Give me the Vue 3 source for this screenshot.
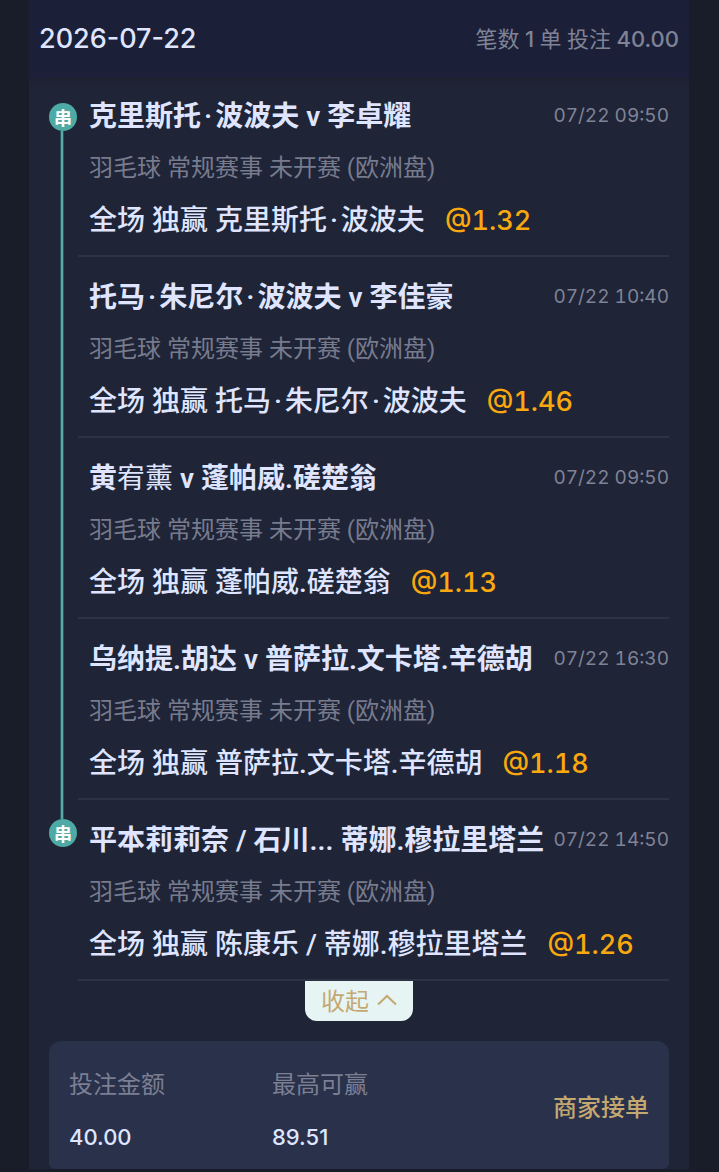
<script setup>
const bets = [
  { match: '克里斯托·波波夫 v 李卓耀', time: '07/22 09:50', pick: '全场 独赢 克里斯托·波波夫', odds: '@1.32' },
  { match: '托马·朱尼尔·波波夫 v 李佳豪', time: '07/22 10:40', pick: '全场 独赢 托马·朱尼尔·波波夫', odds: '@1.46' },
  { match: '黄宥薰 v 蓬帕威.磋楚翁', time: '07/22 09:50', pick: '全场 独赢 蓬帕威.磋楚翁', odds: '@1.13' },
  { match: '乌纳提.胡达 v 普萨拉.文卡塔.辛德胡', time: '07/22 16:30', pick: '全场 独赢 普萨拉.文卡塔.辛德胡', odds: '@1.18' },
  { match: '平本莉莉奈 / 石川... 蒂娜.穆拉里塔兰', time: '07/22 14:50', pick: '全场 独赢 陈康乐 / 蒂娜.穆拉里塔兰', odds: '@1.26' },
]

// Splits a name so that its middle dots and rare characters can be styled.
function parts(text) {
  return text
    .split(/(·|宥薰)/)
    .filter(Boolean)
    .map((t) => ({ text: t, dot: t === '·', light: t === '宥薰' }))
}
</script>

<template>
  <main class="page">
    <section class="panel">
      <header class="day">
        <h1 class="date">2026-07-22</h1>
        <p class="totals">笔数 <b>1</b> 单 投注 <b>40.00</b></p>
      </header>

      <div class="slip">
        <div class="parlay">
          <div class="rail">
            <span class="badge">串</span>
            <span class="line"></span>
            <span class="badge">串</span>
          </div>
          <ul class="bets">
            <li v-for="bet in bets" :key="bet.match" class="bet">
              <div class="top">
                <h2 class="match"><span v-for="(p, i) in parts(bet.match)" :key="i" :class="{ light: p.light, dot: p.dot }">{{ p.text }}</span></h2>
                <time class="time">{{ bet.time }}</time>
              </div>
              <p class="league">羽毛球 常规赛事 未开赛 (欧洲盘)</p>
              <p class="pick"><span v-for="(p, i) in parts(bet.pick)" :key="i" :class="{ dot: p.dot }">{{ p.text }}</span><span class="odds">{{ bet.odds }}</span></p>
            </li>
          </ul>
        </div>

        <button class="toggle" type="button">
          收起
          <svg class="chevron" viewBox="0 0 20 12" aria-hidden="true"><path d="M1 10.500 10 2l9 8.500" /></svg>
        </button>

        <div class="summary">
          <dl class="stat"><dt>投注金额</dt><dd>40.00</dd></dl>
          <dl class="stat"><dt>最高可赢</dt><dd>89.51</dd></dl>
          <p class="status">商家接单</p>
        </div>
      </div>
    </section>
  </main>
</template>

<style>
body {
  margin: 0;
  background: #191c29;
}
</style>

<style scoped>
* {
  box-sizing: border-box;
}
h1, h2, p, ul, dl, dd {
  margin: 0;
  padding: 0;
}
.page {
  padding: 0 30px 3px 29px;
  background: #191c29;
  color: #dfe5ff;
  font-family: Inter, "Noto Sans CJK SC", sans-serif;
}
.panel {
  background: #1f2437;
}
.day {
  position: relative;
  display: flex;
  align-items: center;
  justify-content: space-between;
  height: 76px;
  padding: 0 10px;
  background: #1b1f38;
  box-shadow: 0 2px 0 #1b1f38, 0 4px 8px #1d1f2c;
  clip-path: inset(0 0 -12px 0);
}
.date {
  font-size: 27px;
  font-weight: 500;
}
.totals {
  padding-bottom: 3px;
  font-family: Roboto, "Noto Sans CJK SC", sans-serif;
  font-size: 22px;
  color: #7f8396;
}
.totals b {
  font-family: Inter, sans-serif;
  font-weight: 500;
}
.slip {
  padding: 0 20px;
}
.parlay {
  display: flex;
  gap: 1px;
}
.rail {
  display: flex;
  flex: none;
  flex-direction: column;
  align-items: center;
  width: 28px;
  padding: 27px 0 134px;
}
.badge {
  flex: none;
  width: 28px;
  height: 28px;
  border-radius: 50%;
  background: #4eaaa4;
  color: #fff;
  font-family: "Noto Sans CJK SC", sans-serif;
  font-size: 18px;
  font-weight: 700;
  line-height: 28px;
  text-align: center;
}
.line {
  flex: 1;
  width: 4px;
  margin-right: 2px;
  border: solid #29545e;
  border-width: 0 1px;
  background: #5baaa8;
}
.bets {
  flex: 1;
  min-width: 0;
  list-style: none;
}
.bet {
  padding: 13px 0 8px 11px;
  border-bottom: 2px solid #2e3245;
}
.top {
  display: flex;
  align-items: center;
  justify-content: space-between;
  height: 53px;
  white-space: nowrap;
}
.match,
.league,
.pick {
  font-family: Roboto, "Noto Sans CJK SC", sans-serif;
}
.match {
  padding-top: 3px;
  font-size: 28px;
  font-weight: 600;
  line-height: 50px;
}
.light {
  font-weight: 400;
}
.dot {
  margin: 0 3px;
}
.time {
  font-size: 19px;
  font-variant-numeric: tabular-nums;
  color: #7f8396;
}
.league {
  font-size: 24px;
  line-height: 53px;
  color: #777b8e;
}
.pick {
  font-size: 28px;
  font-weight: 500;
  line-height: 52px;
  white-space: nowrap;
}
.odds {
  margin-left: 20px;
  color: #f9a80e;
  font-family: Inter, sans-serif;
  font-size: 27px;
  font-variant-numeric: tabular-nums;
}
.toggle {
  display: flex;
  align-items: center;
  justify-content: center;
  gap: 8px;
  width: 108px;
  height: 41px;
  margin: -1px auto 20px;
  padding: 0 0 2px;
  border: 0;
  border-radius: 0 0 12px 12px;
  background: #e6f5f4;
  color: #c4a871;
  font: 24px Inter, "Noto Sans CJK SC", sans-serif;
  cursor: pointer;
}
.chevron {
  width: 20px;
  height: 12px;
  fill: none;
  stroke: currentColor;
  stroke-width: 2;
}
.summary {
  display: grid;
  grid-template-columns: 35% 1fr auto;
  align-items: center;
  height: 128px;
  padding: 0 20px;
  border-radius: 12px 12px 6px 6px;
  background: #2a314b;
}
.stat {
  padding-top: 12px;
}
.stat dt {
  font-size: 24px;
  line-height: 52px;
  color: #7b7f93;
}
.stat dd {
  font-size: 22px;
  font-weight: 500;
  line-height: 52px;
}
.status {
  padding-top: 1px;
  font-size: 24px;
  font-weight: 500;
  color: #c4a871;
}
</style>
